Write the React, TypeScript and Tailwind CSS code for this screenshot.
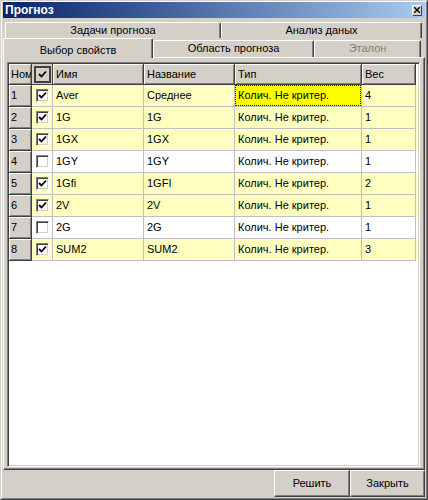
import React from "react";

interface Row {
  num: number;
  checked: boolean;
  name: string;
  title: string;
  type: string;
  weight: string;
}

const rows: Row[] = [
  { num: 1, checked: true, name: "Aver", title: "Среднее", type: "Колич. Не критер.", weight: "4" },
  { num: 2, checked: true, name: "1G", title: "1G", type: "Колич. Не критер.", weight: "1" },
  { num: 3, checked: true, name: "1GX", title: "1GX", type: "Колич. Не критер.", weight: "1" },
  { num: 4, checked: false, name: "1GY", title: "1GY", type: "Колич. Не критер.", weight: "1" },
  { num: 5, checked: true, name: "1Gfi", title: "1GFI", type: "Колич. Не критер.", weight: "2" },
  { num: 6, checked: true, name: "2V", title: "2V", type: "Колич. Не критер.", weight: "1" },
  { num: 7, checked: false, name: "2G", title: "2G", type: "Колич. Не критер.", weight: "1" },
  { num: 8, checked: true, name: "SUM2", title: "SUM2", type: "Колич. Не критер.", weight: "3" },
];

const fixedCell =
  "flex items-center pl-[2px] overflow-hidden whitespace-nowrap bg-[#d4d0c8] border-r border-b border-[#404040] shadow-[inset_1px_1px_0_#ffffff,inset_-1px_-1px_0_#808080]";
const dataCell =
  "flex items-center pl-[3px] overflow-hidden whitespace-nowrap border-r border-b border-[#c0c0c0]";

const Check = () => (
  <svg width="9" height="9" viewBox="0 0 9 9">
    <path d="M1 4 L3.5 6.5 L8 1.5" fill="none" stroke="#000" strokeWidth="1.8" />
  </svg>
);

const CheckBox = ({ checked }: { checked: boolean }) => (
  <div className="flex h-[13px] w-[13px] items-center justify-center bg-white border border-t-[#808080] border-l-[#808080] border-r-white border-b-white shadow-[inset_1px_1px_0_#404040,inset_-1px_-1px_0_#d4d0c8]">
    {checked && <Check />}
  </div>
);

const Tab = ({
  label,
  className,
  disabled,
}: {
  label: string;
  className: string;
  disabled?: boolean;
}) => (
  <div
    className={`flex items-center justify-center rounded-t-[2px] border-t border-l border-r border-t-white border-l-white border-r-[#404040] shadow-[inset_-1px_0_0_#808080] bg-[#d4d0c8] ${className} ${
      disabled ? "text-[#808080]" : "text-black"
    }`}
  >
    {label}
  </div>
);

const Button = ({ label, className }: { label: string; className: string }) => (
  <button
    type="button"
    className={`flex items-center justify-center h-full border border-t-white border-l-white border-r-[#404040] border-b-[#404040] shadow-[inset_-1px_-1px_0_#808080] bg-[#d4d0c8] ${className}`}
  >
    {label}
  </button>
);

export default function App() {
  return (
    <div className="w-[428px] h-[500px] bg-[#d4d0c8] border border-t-[#d4d0c8] border-l-[#d4d0c8] border-r-[#404040] border-b-[#404040] font-['Liberation_Sans',Arial,sans-serif] text-[11px] text-black">
      <div className="flex h-full flex-col border border-t-white border-l-white border-r-[#808080] border-b-[#808080] p-px">
        {/* caption */}
        <div className="-mt-px flex h-[16px] shrink-0 items-center justify-between bg-linear-to-r from-[#0a246a] to-[#a6caf0] pl-[2px] pr-[3px]">
          <span className="text-[12px] font-bold text-white leading-none">Прогноз</span>
          <div className="flex h-[11px] w-[10px] items-center justify-center bg-[#d4d0c8] border border-t-white border-l-white border-r-[#404040] border-b-[#404040]">
            <svg width="6" height="6" viewBox="0 0 6 6">
              <path d="M0 0 L6 6 M6 0 L0 6" stroke="#000" strokeWidth="1.3" />
            </svg>
          </div>
        </div>

        {/* tabs, back row */}
        <div className="mt-[4px] flex h-[18px] shrink-0 pl-[2px] pb-[2px]">
          <Tab label="Задачи прогноза" className="w-[216px]" />
          <Tab label="Анализ даных" className="w-[201px]" />
        </div>

        {/* tabs, front row */}
        <div className="relative z-10 flex h-[17px] shrink-0">
          <div className="relative z-10 -mb-px flex h-[20px] w-[150px] self-end items-center justify-center rounded-t-[2px] border-t border-l border-r border-t-white border-l-white border-r-[#404040] shadow-[inset_-1px_0_0_#808080] bg-[#d4d0c8] pt-[4px]">
            Выбор свойств
          </div>
          <Tab label="Область прогноза" className="w-[161px] pb-[2px]" />
          <Tab label="Эталон" className="w-[107px] pb-[2px]" disabled />
        </div>

        {/* tab page */}
        <div className="flex min-h-0 flex-1 flex-col border-t border-l border-r border-b border-t-white border-l-white border-r-[#404040] border-b-[#404040] shadow-[inset_-1px_-1px_0_#808080] pt-[4px] pl-[3px] pr-[4px] pb-[2px]">
          <div className="flex min-h-0 flex-1 flex-col border border-t-[#808080] border-l-[#808080] border-r-white border-b-white shadow-[inset_1px_1px_0_#404040,inset_-1px_-1px_0_#d4d0c8] p-px">
            <div className="flex-1 bg-white">
              {/* header */}
              <div className="flex h-[21px]">
                <div className={`${fixedCell} w-[23px]`}>Ном</div>
                <div className="flex w-[21px] items-center justify-center bg-[#d4d0c8] border-r border-b border-[#404040]">
                  <div className="flex h-[17px] w-[17px] items-center justify-center border-2 border-[#404040] bg-[#d4d0c8]">
                    <Check />
                  </div>
                </div>
                <div className={`${fixedCell} w-[91px] pl-[3px]`}>Имя</div>
                <div className={`${fixedCell} w-[91px] pl-[3px]`}>Название</div>
                <div className={`${fixedCell} w-[127px] pl-[3px]`}>Тип</div>
                <div className={`${fixedCell} w-[54px] pl-[3px]`}>Вес</div>
              </div>

              {rows.map((r, i) => {
                const bg = r.checked ? "bg-[#ffffc0]" : "bg-white";
                return (
                  <div key={r.num} className={`flex h-[22px] ${bg}`}>
                    <div className={`${fixedCell} w-[23px]`}>{r.num}</div>
                    <div className="flex w-[21px] items-center justify-center border-r border-b border-[#c0c0c0]">
                      <CheckBox checked={r.checked} />
                    </div>
                    <div className={`${dataCell} w-[91px]`}>{r.name}</div>
                    <div className={`${dataCell} w-[91px]`}>{r.title}</div>
                    {i === 0 ? (
                      <div className="w-[127px] border-r border-b border-[#c0c0c0] bg-[#ffff00]">
                        <div className="flex h-full items-center border border-dotted border-[#0000c8] pl-[2px] whitespace-nowrap">
                          {r.type}
                        </div>
                      </div>
                    ) : (
                      <div className={`${dataCell} w-[127px]`}>{r.type}</div>
                    )}
                    <div className={`${dataCell} w-[54px]`}>{r.weight}</div>
                  </div>
                );
              })}
            </div>
          </div>
        </div>

        {/* buttons */}
        <div className="flex h-[27px] shrink-0 justify-end">
          <Button label="Решить" className="w-[76px]" />
          <Button label="Закрыть" className="w-[75px]" />
        </div>
      </div>
    </div>
  );
}
